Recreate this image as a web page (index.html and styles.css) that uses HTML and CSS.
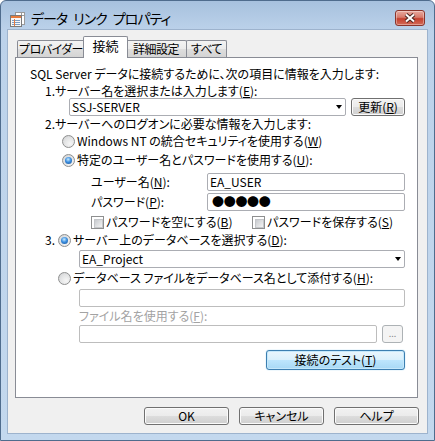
FILE: index.html
```html
<!DOCTYPE html>
<html lang="ja">
<head>
    <meta charset="UTF-8">
    <title>データ リンク プロパティ</title>
    <link rel="stylesheet" href="styles.css">
</head>
<body>
    <div class="window">
        <div class="titlebar">
            <svg class="app-icon" width="16" height="16" viewBox="0 0 16 16">
                <rect x="5.5" y="0.5" width="9" height="12" fill="#fff" stroke="#9a9a9a"/>
                <path d="M11.5 0.5v3h3" fill="none" stroke="#9a9a9a"/>
                <rect x="0.5" y="3.5" width="11" height="11" fill="#f8f8f8" stroke="#7a7a7a"/>
                <rect x="1" y="4" width="10" height="2" fill="#e77b3c"/>
                <path d="M2 8.5h8M2 10.5h8M2 12.5h8" stroke="#7d9cc2"/>
                <path d="M4.5 7v7" stroke="#e77b3c"/>
            </svg>
            <span class="title">データ リンク プロパティ</span>
            <div class="close-btn">
                <svg width="14" height="10" viewBox="0 0 14 10">
                    <path d="M3 1.5l8 7M11 1.5l-8 7" stroke="#4a2520" stroke-width="4"/>
                    <path d="M3 1.5l8 7M11 1.5l-8 7" stroke="#fff" stroke-width="2"/>
                </svg>
            </div>
        </div>

        <div class="client">
            <div class="tabs">
                <div class="tab provider">プロバイダー</div>
                <div class="tab active">接続</div>
                <div class="tab advanced">詳細設定</div>
                <div class="tab all">すべて</div>
            </div>

            <div class="panel">
                <div class="intro">SQL Server データに接続するために、次の項目に情報を入力します:</div>

                <div class="step"><span class="num">1.</span>サーバー名を選択または入力します(<u>E</u>):</div>
                <div class="server-row">
                    <div class="combo"><span class="value">SSJ-SERVER</span><span class="arrow"></span></div>
                    <div class="btn refresh">更新(<u>R</u>)</div>
                </div>

                <div class="step logon"><span class="num">2.</span>サーバーへのログオンに必要な情報を入力します:</div>
                <div class="option nt">
                    <span class="radio"></span>Windows NT の統合セキュリティを使用する(<u>W</u>)
                </div>
                <div class="option specific">
                    <span class="radio checked"></span>特定のユーザー名とパスワードを使用する(<u>U</u>):
                </div>
                <div class="field user">
                    <span class="label">ユーザー名(<u>N</u>):</span>
                    <div class="textbox">EA_USER</div>
                </div>
                <div class="field pass">
                    <span class="label">パスワード(<u>P</u>):</span>
                    <div class="textbox dots">●●●●●</div>
                </div>
                <div class="checks">
                    <span class="check first"><span class="box"></span>パスワードを空にする(<u>B</u>)</span>
                    <span class="check"><span class="box"></span>パスワードを保存する(<u>S</u>)</span>
                </div>

                <div class="db-select">
                    <span class="num">3.</span>
                    <span class="radio checked"></span>サーバー上のデータベースを選択する(<u>D</u>):
                </div>
                <div class="db-combo">
                    <div class="combo"><span class="value">EA_Project</span><span class="arrow"></span></div>
                </div>
                <div class="option attach">
                    <span class="radio"></span>データベース ファイルをデータベース名として添付する(<u>H</u>):
                </div>
                <div class="file-box">
                    <div class="textbox disabled"></div>
                </div>
                <div class="file-label">ファイル名を使用する(<u>F</u>):</div>
                <div class="file-row">
                    <div class="textbox disabled"></div>
                    <div class="btn browse">...</div>
                </div>
                <div class="test-row">
                    <div class="btn default test">接続のテスト(<u>T</u>)</div>
                </div>
            </div>

            <div class="footer">
                <div class="btn footer-btn">OK</div>
                <div class="btn footer-btn">キャンセル</div>
                <div class="btn footer-btn">ヘルプ</div>
            </div>
        </div>
    </div>
</body>
</html>
```

FILE: styles.css
```css
* {
    box-sizing: border-box;
}

body {
    margin: 0;
    font-family: "Noto Sans CJK JP", "Noto Sans", sans-serif;
    font-size: 12px;
    line-height: 16px;
    font-feature-settings: "palt";
    color: #000;
    background: #fff;
}

u {
    text-decoration-thickness: 1px;
    text-underline-offset: 1px;
}

/* window frame */
.window {
    width: 435px;
    height: 441px;
    border: 1px solid #4f6c8d;
    border-radius: 6px 6px 0 0;
    background: linear-gradient(#a7c1de, #bcd2ea 30px, #c3d8ee);
    display: flex;
    flex-direction: column;
}

.titlebar {
    height: 28px;
    flex: none;
    display: flex;
    align-items: center;
    padding: 5px 9px 0 9px;
}

.app-icon {
    margin: 4px 5px 0 0;
}

.title {
    font-size: 14px;
    letter-spacing: -1px;
    word-spacing: 4px;
}

.close-btn {
    margin-left: auto;
    width: 30px;
    height: 16px;
    border: 1px solid #8a352c;
    border-radius: 3px;
    background: linear-gradient(#e8aa9f, #d77a6c 45%, #c4402f 55%, #d36b58);
    box-shadow: inset 0 0 0 1px rgba(255, 255, 255, 0.35);
    display: flex;
    align-items: center;
    justify-content: center;
}

.client {
    flex: 1;
    margin: 0 6px 6px;
    background: #f0f0f0;
    border: 1px solid #9db3cd;
    display: flex;
    flex-direction: column;
}

/* tabs */
.tabs {
    display: flex;
    align-items: flex-end;
    height: 21px;
    margin-top: 6px;
    padding-left: 9px;
    position: relative;
    z-index: 1;
}

.tab {
    height: 17px;
    line-height: 15px;
    text-align: center;
    letter-spacing: -0.5px;
    white-space: nowrap;
    border: 1px solid #898c95;
    border-bottom: none;
    border-radius: 2px 2px 0 0;
    background: linear-gradient(#f3f3f3, #ebebeb 50%, #dedede 50%, #d4d4d4);
    margin-left: -1px;
}

.tab.provider {
    width: 68px;
    margin-left: 0;
}

.tab.advanced {
    width: 62px;
}

.tab.all {
    width: 41px;
}

.tab.active {
    width: 45px;
    height: 22px;
    padding-top: 1px;
    line-height: 16px;
    letter-spacing: 0;
    background: #fff;
    margin: 0 -2px -1px;
    position: relative;
    z-index: 2;
    font-size: 13px;
}

.panel {
    flex: 1;
    margin: 0 9px 0 7px;
    border: 1px solid #898c95;
    background: #fff;
    padding: 9px 12px 0 14px;
}

/* panel rows */
.intro,
.step {
    display: flex;
    align-items: center;
}

.intro {
    height: 14px;
    line-height: 14px;
}

.step {
    height: 17px;
    line-height: 15px;
    padding: 1px 0 0 15px;
}

.step.logon {
    height: 14px;
    line-height: 14px;
    padding-top: 0;
    margin-top: 1px;
}

.num {
    width: 10px;
    flex: none;
}

.server-row {
    height: 18px;
    margin-left: 39px;
    display: flex;
}

.option {
    height: 16px;
    display: flex;
    align-items: center;
}

.option.nt {
    margin: 2px 0 0 32px;
}

.option.specific {
    margin: 3px 0 0 32px;
}

.option.attach {
    margin: 2px 0 0 28px;
}

.field {
    height: 18px;
    margin-left: 61px;
    display: flex;
    align-items: center;
}

.field.user {
    margin-top: 5px;
}

.field.pass {
    margin-top: 2px;
}

.label {
    width: 116px;
    flex: none;
}

.checks {
    height: 16px;
    margin: 3px 0 0 61px;
    display: flex;
    align-items: center;
}

.check {
    display: flex;
    align-items: center;
}

.check.first {
    width: 161px;
}

.db-select {
    height: 16px;
    margin: 2px 0 0 15px;
    display: flex;
    align-items: center;
}

.db-select .num {
    width: 13px;
}

.db-combo {
    height: 18px;
    margin: 2px 0 0 49px;
    display: flex;
}

.file-box {
    height: 18px;
    margin: 3px 0 0 49px;
    display: flex;
}

.file-label {
    height: 16px;
    margin: 1px 0 0 49px;
    color: #a3a3a3;
    display: flex;
    align-items: center;
}

.file-row {
    height: 18px;
    margin: 1px 2px 0 49px;
    display: flex;
    gap: 5px;
}

.test-row {
    margin-top: 7px;
    display: flex;
    justify-content: flex-end;
}

/* controls */
.radio {
    width: 13px;
    height: 13px;
    flex: none;
    margin-right: 2px;
    border-radius: 50%;
    border: 1px solid #8e8f8f;
    background: radial-gradient(circle at 65% 70%, #f6f6f6, #e0e1e2 60%, #c9cacb);
    display: flex;
    align-items: center;
    justify-content: center;
}

.radio.checked::after {
    content: "";
    width: 7px;
    height: 7px;
    border-radius: 50%;
    background: radial-gradient(circle at 45% 35%, #c9ecff, #3b8ee0 45%, #164f93);
}

.check .box {
    width: 13px;
    height: 13px;
    flex: none;
    margin-right: 2px;
    border: 1px solid #8e8f8f;
    background: #fff;
    padding: 2px;
}

.check .box::after {
    content: "";
    display: block;
    width: 100%;
    height: 100%;
    border: 1px solid #c4c6c9;
    background: linear-gradient(135deg, #c7cace, #f3f3f3);
}

.textbox,
.combo {
    flex: 1;
    height: 18px;
    border: 1px solid #abadb3;
    border-radius: 2px;
    background: #fff;
    padding: 0 2px;
    display: flex;
    align-items: center;
}

.textbox.disabled {
    border-color: #bdbdbd;
}

.dots {
    padding-left: 4px;
    letter-spacing: -0.3px;
}

.combo .value {
    flex: 1;
}

.arrow {
    width: 0;
    height: 0;
    margin-right: 1px;
    border-left: 3.5px solid transparent;
    border-right: 3.5px solid transparent;
    border-top: 4px solid #000;
}

.btn {
    height: 18px;
    border: 1px solid #707070;
    border-radius: 3px;
    background: linear-gradient(#f2f2f2, #ebebeb 50%, #dddddd 50%, #cfcfcf);
    box-shadow: inset 0 0 0 1px #fbfbfb;
    display: flex;
    align-items: center;
    justify-content: center;
}

.btn.refresh {
    width: 54px;
    margin-left: 5px;
}

.btn.browse {
    width: 21px;
    border-color: #adb2b5;
    background: #f4f4f4;
    color: #8a8a8a;
    font-size: 9px;
    box-shadow: none;
}

.btn.default {
    border-color: #3c7fb1;
    background: linear-gradient(#eaf6fd, #d9f0fc 50%, #bee6fd 50%, #a7d9f5);
    box-shadow: inset 0 0 0 1px #c5e8fb, 0 0 1px #5eb7ea;
}

.btn.test {
    width: 139px;
    height: 20px;
}

.footer {
    display: flex;
    justify-content: flex-end;
    gap: 10px;
    margin: 9px 8px 8px 0;
}

.btn.footer-btn {
    width: 85px;
}
```
